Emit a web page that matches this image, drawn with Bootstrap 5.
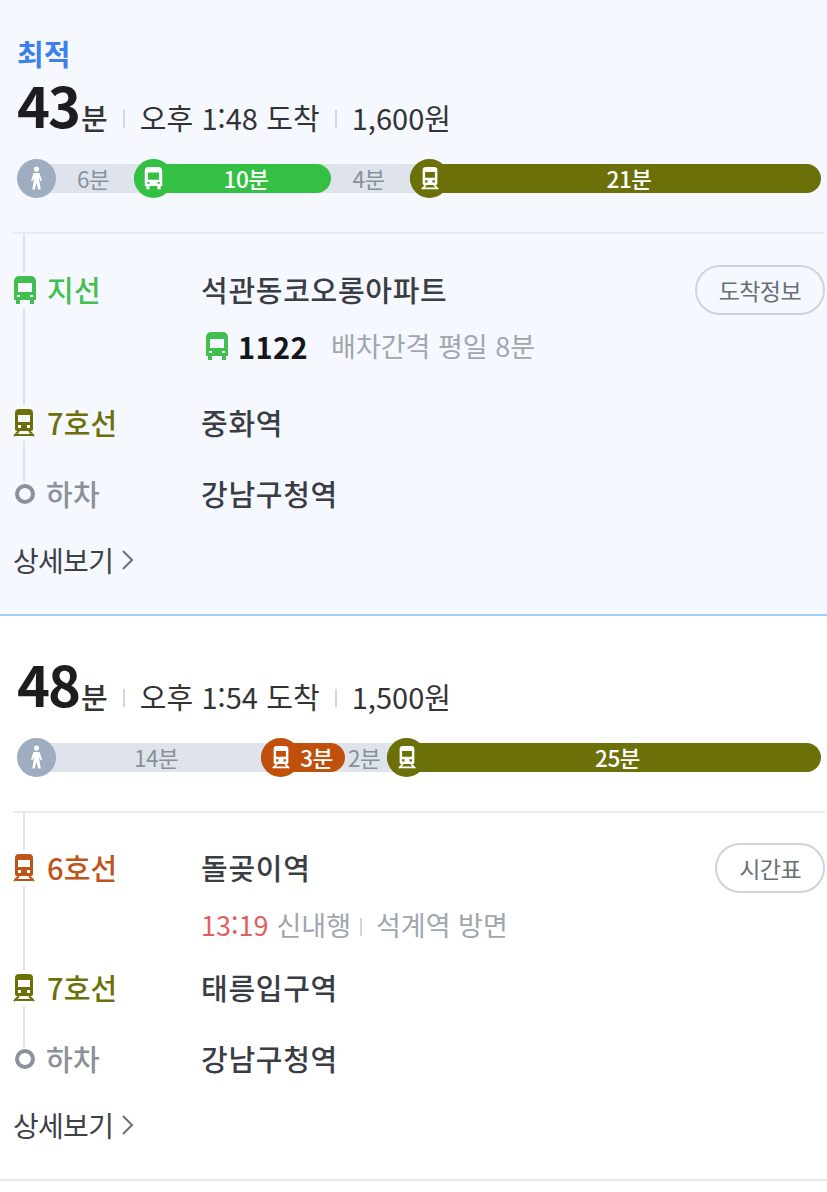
<!DOCTYPE html>
<html lang="ko">
<head>
<meta charset="utf-8">
<title>길찾기</title>
<link href="https://cdn.jsdelivr.net/npm/bootstrap@5.3.0/dist/css/bootstrap.min.css" rel="stylesheet">
<style>
html,body{margin:0;background:#fff}
body{font-family:"Noto Sans CJK KR","Noto Sans",sans-serif;color:#333;width:827px;overflow-x:hidden;font-kerning:none}
.trip{--sec:#fff;background:var(--sec);padding:46px 2px 34px 13px}
.trip-best{--sec:#f5f9ff;padding-top:36px;border-bottom:2px solid #a9cbf7}
.trip-last{padding-bottom:34px;border-bottom:2px solid #e8eaee}
.best-tag{font-size:29px;line-height:34px;font-weight:700;color:#3b7ff0;padding-left:4px;margin-bottom:13px}
.sumline{height:48px;padding-left:4px;color:#333;font-size:29px;line-height:48px;letter-spacing:.05px}
.mins{font-size:56px;font-weight:700;color:#1d1d1f;letter-spacing:-2px;line-height:48px;position:relative;top:-3px}
.mins-unit{font-size:29px;font-weight:500;margin-right:15px;margin-left:2px;position:relative;top:10px;letter-spacing:0}
.vsep{display:inline-block;width:2px;height:18px;background:#d4d7dc;margin-right:15px;position:relative;top:12px}
.timeval{margin-right:15px;position:relative;top:10px}
.pathbar{position:relative;height:38px;margin:28px 5px 35px 4px;align-items:center}
.pathbar::before{content:"";position:absolute;left:10px;right:10px;top:5px;height:29px;background:#dfe4ec}
.seg{position:relative;height:29px;line-height:29px;font-size:22.500px;text-align:center;color:#8a909b;flex:none;letter-spacing:-.5px}
.seg-gap{padding-right:4px}
.seg-color{color:#fff;border-radius:15px;font-weight:500}
.seg-line{padding-left:27px}
.dot{position:absolute;left:0;top:-5px;width:39px;height:39px;border-radius:50%;display:flex;align-items:center;justify-content:center;color:#fff}
.c-walk{background:#9fadc0}.c-bus{background:#33c043}.c-l7{background:#6c7009}.c-l6{background:#c0500c}
.t-bus{color:#41bf50}.t-l7{color:#6c7009}.t-l6{color:#bd5518}
.legs{position:relative;border-top:2px solid #e8ebf0;margin-bottom:26px}
.legs::before{content:"";position:absolute;left:10px;top:0;bottom:20px;width:2px;background:#dfe2ea}
.legrow{position:relative;height:40px}
.leg-first{height:50px;margin-top:31px}
.trip-last .leg-first{margin-top:30px}
.leg-left{width:188px;flex:none;font-size:29px;font-weight:500;line-height:40px;letter-spacing:.2px}
.leg-text{position:relative;top:-1px}
.leg-ico{background:var(--sec);width:26px;height:36px;display:flex;align-items:center;flex:none;margin-right:8px;color:inherit}
.ring{width:20px;height:20px;border:4px solid #8b9099;border-radius:50%;margin:0 2px;flex:none;background:var(--sec);box-shadow:0 0 0 2px var(--sec)}
.stop{font-size:29px;font-weight:500;color:#3a3d44;letter-spacing:.7px;line-height:40px;position:relative;top:-1px}
.getoff{color:#8b9099;gap:9px}
.sub{height:36px;padding-left:188px;font-size:27px;line-height:36px;color:#a0a5ae}
.sub-a{margin-top:13px}
.sub-b{margin-top:14px}
.row-a{margin-top:39px}
.row-b{margin-top:25px}
.row-c{margin-top:31px}
.busno{font-size:29px;font-weight:700;color:#15161a;margin:0 23px 0 9px;letter-spacing:.4px}
.arr{color:#e35d5f;margin-right:8px}
.sub .vsep{height:18px;margin:0 14px 0 9px;top:2px}
.pillbtn{margin-left:auto;height:50px;border:2px solid #cfd3da;border-radius:25px;background:transparent;font-size:23px;color:#6a6e76;padding:0 22px;line-height:44px;letter-spacing:-.6px}
.more{display:flex;align-items:center;font-size:28px;line-height:40px;color:#3d4047;letter-spacing:-.7px;height:40px}
.more svg{margin-left:8px}
</style>
</head>
<body>
<svg width="0" height="0" class="d-block" aria-hidden="true">
  <symbol id="ibus" viewBox="0 0 24 29"><path fill-rule="evenodd" fill="currentColor" d="M6 0h12a5 5 0 0 1 5 5v19h-2v4h-4v-4H7v4H3v-4H1V5a5 5 0 0 1 5-5zM5 7v9h14V7zM4 19v2h3v-2zM17 19v2h3v-2z"/></symbol>
  <symbol id="itrain" viewBox="0 0 22 28"><path fill-rule="evenodd" fill="currentColor" d="M6 0h10a4 4 0 0 1 4 4v16a2 2 0 0 1-2 2H4a2 2 0 0 1-2-2V4a4 4 0 0 1 4-4zM5 6v7h12V6zM5 16v3h3v-3zM14 16v3h3v-3z"/><path fill="none" stroke="currentColor" stroke-width="2" d="M6 22l-5 5M16 22l5 5M3 26h16"/></symbol>
  <symbol id="iwalk" viewBox="0 0 20 28"><circle cx="10" cy="3.5" r="3" fill="currentColor"/><path fill="currentColor" d="M6.500 8h7l3 9-2 .6-1.500-4 .5 5 1.500 9h-3l-2-8-2 8h-3l1.500-9 .5-5-1.500 4-2-.6z"/></symbol>
</svg>

<section class="trip trip-best">
  <div class="best-tag">최적</div>
  <div class="sumline d-flex align-items-center">
    <span class="mins">43</span><span class="mins-unit">분</span><i class="vsep"></i><span class="timeval">오후 1:48 도착</span><i class="vsep"></i><span class="timeval">1,600원</span>
  </div>
  <div class="pathbar d-flex">
    <div class="seg" style="width:117px;padding-left:35px"><span class="dot c-walk"><svg width="17" height="24"><use href="#iwalk"/></svg></span>6분</div>
    <div class="seg seg-color seg-line c-bus" style="width:197px"><span class="dot c-bus"><svg width="19" height="23"><use href="#ibus"/></svg></span>10분</div>
    <div class="seg seg-gap" style="width:79px">4분</div>
    <div class="seg seg-color seg-line c-l7" style="width:411px"><span class="dot c-l7"><svg width="18" height="23"><use href="#itrain"/></svg></span>21분</div>
  </div>
  <div class="legs">
    <div class="legrow leg-first d-flex align-items-center">
      <div class="leg-left d-flex align-items-center t-bus"><span class="leg-ico"><svg width="24" height="29"><use href="#ibus"/></svg></span><span class="leg-text">지선</span></div>
      <div class="stop">석관동코오롱아파트</div>
      <button type="button" class="btn pillbtn">도착정보</button>
    </div>
    <div class="sub sub-a d-flex align-items-center">
      <svg class="t-bus ms-1" width="24" height="29"><use href="#ibus"/></svg><span class="busno">1122</span><span>배차간격 평일 8분</span>
    </div>
    <div class="legrow row-a d-flex align-items-center">
      <div class="leg-left d-flex align-items-center t-l7"><span class="leg-ico"><svg width="22" height="28"><use href="#itrain"/></svg></span><span class="leg-text">7호선</span></div>
      <div class="stop">중화역</div>
    </div>
    <div class="legrow row-c d-flex align-items-center">
      <div class="leg-left d-flex align-items-center getoff"><span class="ring"></span><span class="leg-text">하차</span></div>
      <div class="stop">강남구청역</div>
    </div>
  </div>
  <a class="more text-decoration-none" href="#">상세보기<svg width="13" height="22" viewBox="0 0 13 22"><path d="M2 2l9 9-9 9" fill="none" stroke="#6b6f77" stroke-width="2"/></svg></a>
</section>

<section class="trip trip-last">
  <div class="sumline d-flex align-items-center">
    <span class="mins">48</span><span class="mins-unit">분</span><i class="vsep"></i><span class="timeval">오후 1:54 도착</span><i class="vsep"></i><span class="timeval">1,500원</span>
  </div>
  <div class="pathbar d-flex">
    <div class="seg" style="width:244px;padding-left:34px"><span class="dot c-walk"><svg width="17" height="24"><use href="#iwalk"/></svg></span>14분</div>
    <div class="seg seg-color seg-line c-l6" style="width:84px"><span class="dot c-l6"><svg width="18" height="23"><use href="#itrain"/></svg></span>3분</div>
    <div class="seg seg-gap" style="width:42px">2분</div>
    <div class="seg seg-color seg-line c-l7" style="width:434px"><span class="dot c-l7"><svg width="18" height="23"><use href="#itrain"/></svg></span>25분</div>
  </div>
  <div class="legs">
    <div class="legrow leg-first d-flex align-items-center">
      <div class="leg-left d-flex align-items-center t-l6"><span class="leg-ico"><svg width="22" height="28"><use href="#itrain"/></svg></span><span class="leg-text">6호선</span></div>
      <div class="stop">돌곶이역</div>
      <button type="button" class="btn pillbtn">시간표</button>
    </div>
    <div class="sub sub-b d-flex align-items-center">
      <span class="arr">13:19</span><span>신내행</span><i class="vsep"></i><span>석계역 방면</span>
    </div>
    <div class="legrow row-b d-flex align-items-center">
      <div class="leg-left d-flex align-items-center t-l7"><span class="leg-ico"><svg width="22" height="28"><use href="#itrain"/></svg></span><span class="leg-text">7호선</span></div>
      <div class="stop">태릉입구역</div>
    </div>
    <div class="legrow row-c d-flex align-items-center">
      <div class="leg-left d-flex align-items-center getoff"><span class="ring"></span><span class="leg-text">하차</span></div>
      <div class="stop">강남구청역</div>
    </div>
  </div>
  <a class="more text-decoration-none" href="#">상세보기<svg width="13" height="22" viewBox="0 0 13 22"><path d="M2 2l9 9-9 9" fill="none" stroke="#6b6f77" stroke-width="2"/></svg></a>
</section>
<script src="https://cdn.jsdelivr.net/npm/bootstrap@5.3.0/dist/js/bootstrap.bundle.min.js"></script>
</body>
</html>
